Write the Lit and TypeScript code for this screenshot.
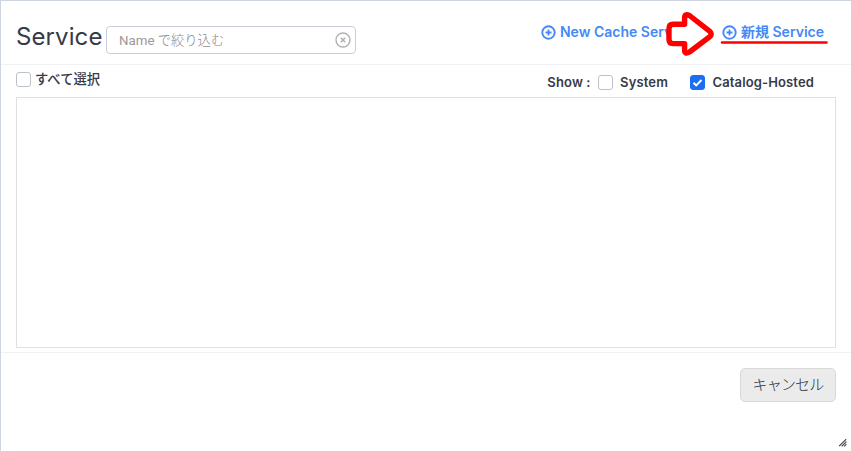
import { LitElement, html, css } from "lit";
import { customElement } from "lit/decorators.js";

@customElement("app-root")
class AppRoot extends LitElement {
  static styles = css`
    :host {
      display: block;
      font-family: Inter, "Noto Sans CJK JP", sans-serif;
      color: #373a47;
    }
    * { box-sizing: border-box; }
    .dialog {
      position: relative;
      width: 852px;
      height: 452px;
      background: #fff;
      border: 1px solid #cfd5df;
      display: flex;
      flex-direction: column;
      white-space: nowrap;
      overflow: hidden;
    }
    .header {
      height: 64px;
      flex: none;
      border-bottom: 1px solid #f0f1f3;
      display: flex;
      align-items: flex-start;
      padding: 0 27px 0 15px;
    }
    .title {
      margin: 21px 0 0;
      width: 90px;
      font-size: 24px;
      line-height: 30px;
      font-weight: 400;
      letter-spacing: 0.1px;
    }
    .search {
      margin-top: 25px;
      width: 250px;
      height: 28px;
      border: 1px solid #cbcfdb;
      border-radius: 4px;
      padding: 0 4px 0 12px;
      display: flex;
      align-items: center;
      justify-content: space-between;
      font-size: 13px;
      color: #999;
    }
    .hint {
      font-family: Roboto, "Noto Sans CJK JP", sans-serif;
      font-size: 13.3px;
      line-height: 18px;
      color: #999;
    }
    .hint .kana { font-family: "Noto Sans CJK JP", sans-serif; font-weight: 300; color: #8a8a8a; }
    .search svg, .link svg, .box svg { display: block; }
    .links { margin: 22px 0 0 auto; display: flex; }
    .link {
      display: flex;
      align-items: center;
      gap: 4px;
      height: 18px;
      font-size: 14px;
      line-height: 18px;
      font-weight: 600;
      color: #4489f7;
    }
    .link.cache { width: 181px; }
    .filters {
      height: 32px;
      flex: none;
      display: flex;
      padding: 0 37px 0 15px;
      font-size: 13px;
      line-height: 18px;
    }
    .all { display: flex; align-items: center; gap: 4px; height: 28px; font-size: 13.3px; font-weight: 500; }
    .show { display: flex; align-items: center; height: 34px; margin-left: auto; font-weight: 600; letter-spacing: 0.13px; }
    .show .box { margin-left: 7px; margin-right: 7.5px; }
    .show .box.on { margin-left: 22px; }
    .box { width: 15px; height: 15px; border: 1px solid #bcc1ca; border-radius: 3px; background: #fff; flex: none; }
    .box.on { background: #1b6ef3; border-color: #1b6ef3; }
    .list { height: 251px; flex: none; margin: 0 15px; border: 1px solid #dfe0e2; }
    .footer {
      margin-top: 4px;
      flex: 1;
      border-top: 1px solid #f0f1f3;
      padding: 15px 15px 0;
      display: flex;
      justify-content: flex-end;
      align-items: flex-start;
    }
    .cancel {
      width: 96px;
      height: 34px;
      padding: 0 0 2px;
      border: 1px solid #d8d8d8;
      border-radius: 5px;
      background: #ebebeb;
      color: #2b2e3c;
      font: 300 15px/30px "Noto Sans CJK JP", sans-serif;
      letter-spacing: -0.8px;
    }
    .grip { position: absolute; right: 4px; bottom: 4px; }
    .marks { position: absolute; left: -1px; top: -1px; pointer-events: none; }
  `;

  plus() {
    return html`<svg width="15" height="15" viewBox="0 0 15 15" fill="none" stroke="#4489f7">
      <circle cx="7.5" cy="7.5" r="6.2" stroke-width="1.9" />
      <path d="M7.5 4.5v6M4.5 7.5h6" stroke-width="1.8" />
    </svg>`;
  }

  render() {
    return html`
      <div class="dialog">
        <div class="header">
          <h1 class="title">Service</h1>
          <div class="search">
            <span class="hint">Name <span class="kana">で絞り込む</span></span>
            <svg width="16" height="16" viewBox="0 0 16 16" fill="none" stroke="#b2b2b2">
              <circle cx="8" cy="8" r="7" stroke-width="1.4" />
              <path d="M5.8 5.8l4.4 4.4M10.2 5.8l-4.4 4.4" stroke-width="1.6" />
            </svg>
          </div>
          <div class="links">
            <div class="link cache">${this.plus()}<span>New Cache Service</span></div>
            <div class="link">${this.plus()}<span>新規 Service</span></div>
          </div>
        </div>
        <div class="filters">
          <label class="all"><span class="box"></span>すべて選択</label>
          <div class="show">
            <span>Show :</span><span class="box"></span><span>System</span>
            <span class="box on"><svg width="13" height="13" viewBox="0 0 13 13" fill="none" stroke="#fff" stroke-width="2">
              <path d="M2.5 6.8l2.7 2.6 5.3-5.4" /></svg></span>
            <span>Catalog-Hosted</span>
          </div>
        </div>
        <div class="list"></div>
        <div class="footer"><button class="cancel">キャンセル</button></div>
        <svg class="grip" width="8" height="8" viewBox="0 0 8 8" stroke="#3c3c3c" stroke-width="1.1">
          <path d="M0.2 7.2l7-7M2.7 7.4l4.7-4.7M5.2 7.4l2.2-2.2" />
        </svg>
        <svg class="marks" width="852" height="70" viewBox="0 0 852 70" fill="none" stroke="#fe0000" stroke-linejoin="round" stroke-linecap="round">
          <path d="M669 28.5Q669 24.3 673 24.3H684.6V18Q684.6 13.2 689.5 15.5L709.5 31.2Q713 34 709.5 36.8L689.5 52Q684.6 54.8 684.6 50V43.6H673Q669 43.6 669 39.5Z" fill="#fff" stroke-width="5.4" />
          <path d="M722 42.5H826.5" stroke-width="2.5" />
        </svg>
      </div>
    `;
  }
}
